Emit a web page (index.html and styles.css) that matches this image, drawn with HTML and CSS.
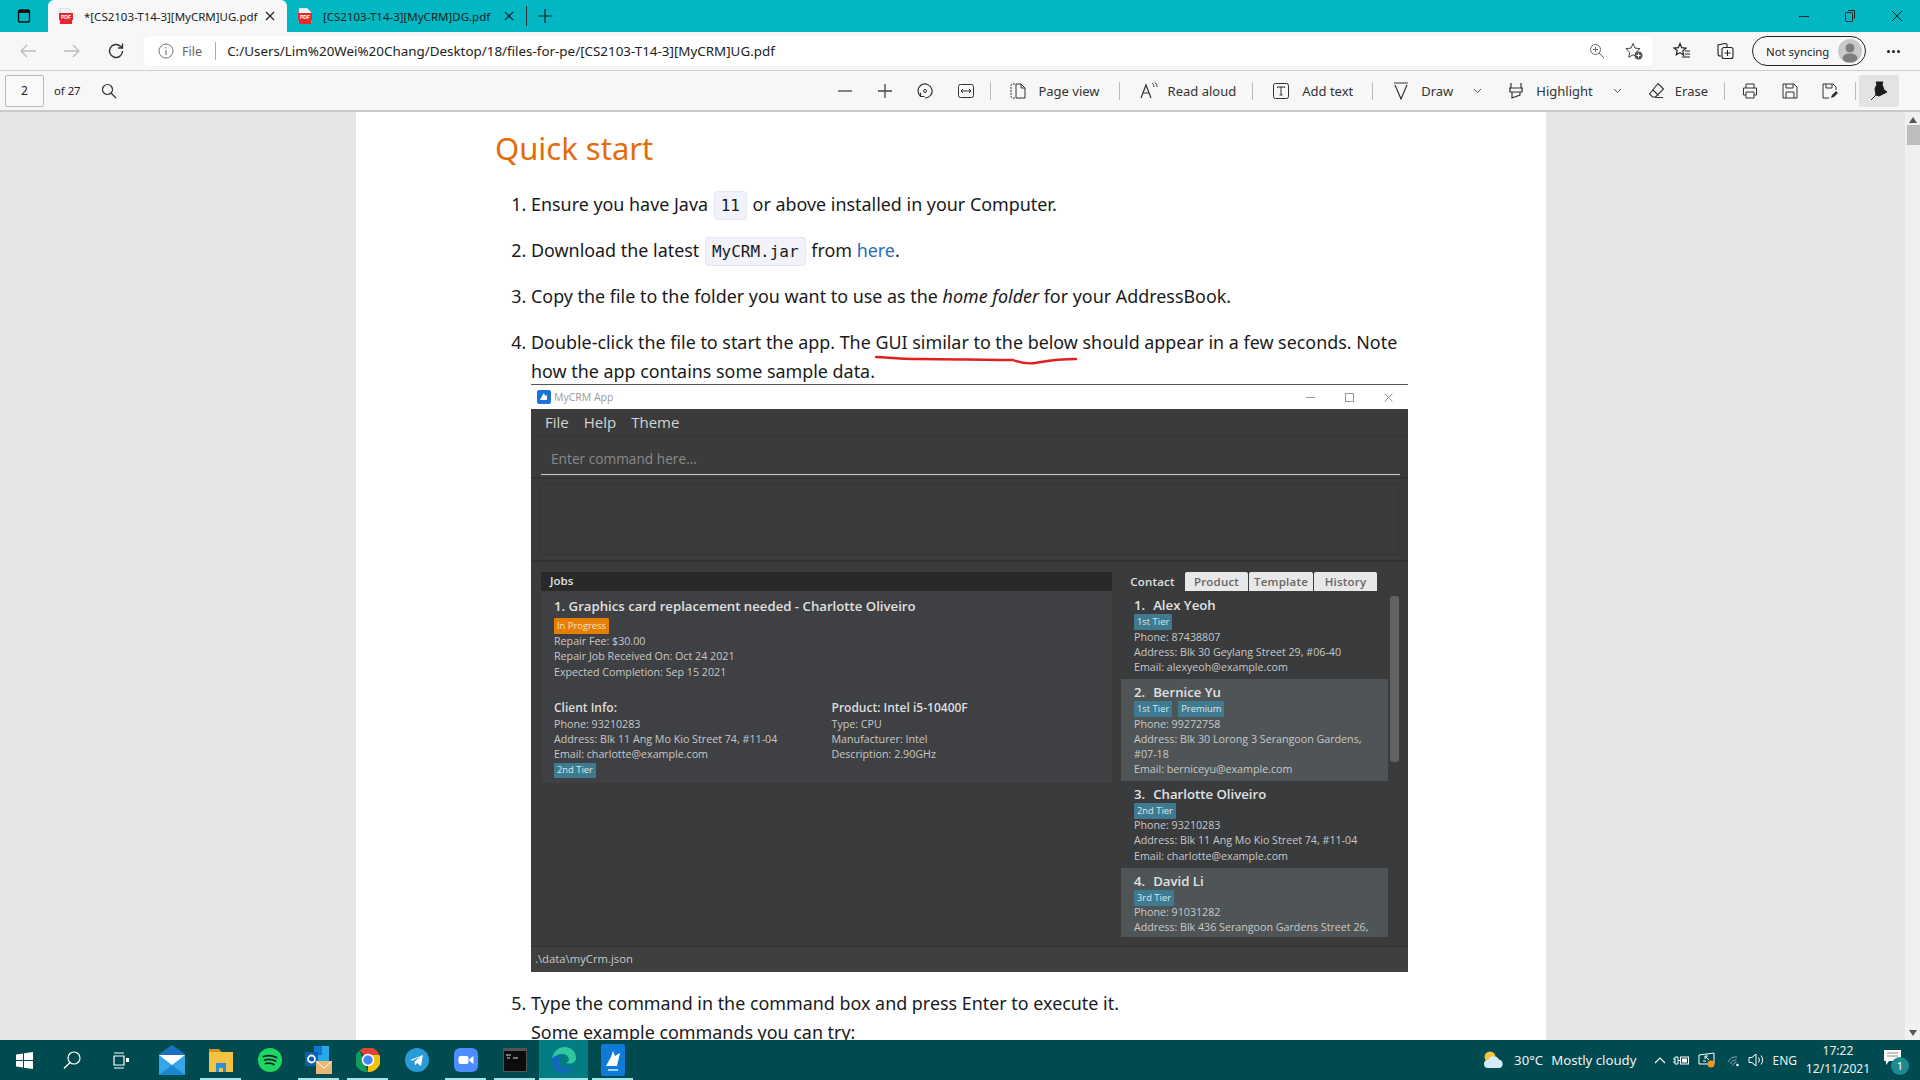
FILE: index.html
```html
<!DOCTYPE html>
<html lang="en">
<head>
<meta charset="utf-8">
<title>MyCRM UG</title>
<link rel="stylesheet" href="styles.css">
</head>
<body>
<header class="tabbar">
  <div class="tabside"><svg width="14" height="14" viewBox="0 0 14 14"><rect x="1.5" y="1" width="11" height="12" rx="1.5" fill="none" stroke="#111" stroke-width="1.4"/><rect x="1.5" y="1" width="11" height="3" fill="#111"/></svg></div>
  <div class="tab active">
    <svg class="pdf" width="14" height="16" viewBox="0 0 14 16"><path d="M1 0h8l4 4v12H1z" fill="#f4f4f4" stroke="#bbb" stroke-width=".5"/><path d="M0 5h14v7h-1v4H1v-4H0z" fill="#e8262c"/><text x="7" y="11" text-anchor="middle" class="pdftxt">PDF</text></svg>
    <span class="tabtitle">*[CS2103-T14-3][MyCRM]UG.pdf</span>
    <svg class="tabx" width="10" height="10" viewBox="0 0 10 10"><path d="M1 1l8 8M9 1l-8 8" stroke="#222" stroke-width="1.2"/></svg>
  </div>
  <div class="tab">
    <svg class="pdf" width="14" height="16" viewBox="0 0 14 16"><path d="M1 0h8l4 4v12H1z" fill="#f4f4f4" stroke="#bbb" stroke-width=".5"/><path d="M0 5h14v7h-1v4H1v-4H0z" fill="#e8262c"/><text x="7" y="11" text-anchor="middle" class="pdftxt">PDF</text></svg>
    <span class="tabtitle">[CS2103-T14-3][MyCRM]DG.pdf</span>
    <svg class="tabx" width="10" height="10" viewBox="0 0 10 10"><path d="M1 1l8 8M9 1l-8 8" stroke="#222" stroke-width="1.2"/></svg>
  </div>
  <div class="tabsep"></div>
  <svg class="plus" width="14" height="14" viewBox="0 0 14 14"><path d="M7 0v14M0 7h14" stroke="#222" stroke-width="1.2"/></svg>
  <div class="winctl">
    <svg width="10" height="10" viewBox="0 0 10 10"><path d="M0 5.5h10" stroke="#222"/></svg>
    <svg width="10" height="12" viewBox="0 0 10 12"><rect x=".5" y="2.5" width="7" height="9" rx="1" fill="none" stroke="#222"/><path d="M3 .5h6.5v8" fill="none" stroke="#222"/></svg>
    <svg width="12" height="12" viewBox="0 0 12 12"><path d="M1 1l10 10M11 1L1 11" stroke="#222"/></svg>
  </div>
</header>

<nav class="addrbar">
  <svg class="nav n-back" width="18" height="16" viewBox="0 0 18 16"><path d="M17 8H2M8 2L2 8l6 6" fill="none" stroke="#bdbdbd" stroke-width="1.3"/></svg>
  <svg class="nav n-fwd" width="18" height="16" viewBox="0 0 18 16"><path d="M1 8h15M10 2l6 6-6 6" fill="none" stroke="#bdbdbd" stroke-width="1.3"/></svg>
  <svg class="nav n-ref" width="18" height="18" viewBox="0 0 18 18"><path d="M15.5 9a6.5 6.5 0 1 1-2-4.7L15.5 6M15.5 1.5V6H11" fill="none" stroke="#333" stroke-width="1.4"/></svg>
  <div class="urlbox">
    <svg class="info" width="16" height="16" viewBox="0 0 16 16"><circle cx="8" cy="8" r="7" fill="none" stroke="#777"/><path d="M8 7v5M8 4v1.6" stroke="#777" stroke-width="1.2"/></svg>
    <span class="file">File</span>
    <span class="urlsep"></span>
    <span class="url">C:/Users/Lim%20Wei%20Chang/Desktop/18/files-for-pe/[CS2103-T14-3][MyCRM]UG.pdf</span>
    <svg class="u-zoom" width="16" height="16" viewBox="0 0 16 16"><circle cx="6.5" cy="6.5" r="5" fill="none" stroke="#666"/><path d="M10 10l5 5M6.5 4v5M4 6.5h5" stroke="#666"/></svg>
    <svg class="u-star" width="18" height="18" viewBox="0 0 18 18"><path d="M8 1.5l2 4.6 5 .5-3.7 3.3 1 4.9L8 12.800l-4.300 2.500 1-4.900L1 6.600l5-.5z" fill="none" stroke="#444"/><circle cx="13.500" cy="13.500" r="4" fill="#555"/><path d="M13.500 11.500v4M11.500 13.500h4" stroke="#fff"/></svg>
  </div>
  <svg class="a-fav" width="18" height="18" viewBox="0 0 18 18"><path d="M7 1.500l1.700 4.200 4.300.4-3.200 2.900.9 4.300L7 10.600l-3.700 2.200.9-4.300L1 6.100l4.300-.4z" fill="none" stroke="#222" stroke-width="1.200"/><path d="M12 9h5M12 12h5M9 15h8" stroke="#222" stroke-width="1.200"/></svg>
  <svg class="a-col" width="18" height="18" viewBox="0 0 18 18"><path d="M4 14H3a2 2 0 0 1-2-2V3l7-1.500a2 2 0 0 1 2 1V5" fill="none" stroke="#222" stroke-width="1.100"/><rect x="5" y="5.500" width="11" height="11" rx="2" fill="none" stroke="#222" stroke-width="1.100"/><path d="M10.500 8v6M7.500 11h6" stroke="#222"/></svg>
  <div class="sync"><span>Not syncing</span><svg width="24" height="24" viewBox="0 0 24 24"><circle cx="12" cy="12" r="12" fill="#c9c9c9"/><circle cx="12" cy="9" r="4.500" fill="#7d7d7d"/><ellipse cx="12" cy="19" rx="7.500" ry="4.500" fill="#7d7d7d"/></svg></div>
  <div class="more"><i></i><i></i><i></i></div>
</nav>

<div class="pdfbar">
  <div class="pagenum">2</div>
  <span class="pageof">of 27</span>
  <svg class="p-search" width="16" height="16" viewBox="0 0 16 16"><circle cx="6.500" cy="6.500" r="5" fill="none" stroke="#333" stroke-width="1.200"/><path d="M10 10l5 5" stroke="#333" stroke-width="1.200"/></svg>
  <div class="tools">
    <svg class="t t-min" width="14" height="14" viewBox="0 0 14 14"><path d="M0 7h14" stroke="#444" stroke-width="1.300"/></svg>
    <svg class="t t-plus" width="14" height="14" viewBox="0 0 14 14"><path d="M0 7h14M7 0v14" stroke="#444" stroke-width="1.300"/></svg>
    <svg class="t t-rot" width="16" height="18" viewBox="0 0 16 18"><path d="M8 16a7 7 0 1 0-4.500-1.700M3.500 10.800v3.700H7.500" fill="none" stroke="#333" stroke-width="1.200"/><circle cx="8" cy="9" r="1.500" fill="none" stroke="#333"/></svg>
    <svg class="t t-fit" width="16" height="14" viewBox="0 0 16 14"><rect x=".5" y=".5" width="15" height="13" rx="2" fill="none" stroke="#333"/><path d="M3 7h10M3 7l2-2M3 7l2 2M13 7l-2-2M13 7l-2 2" fill="none" stroke="#333"/></svg>
    <span class="tsep s1"></span>
    <svg class="t t-page" width="16" height="16" viewBox="0 0 16 16"><path d="M5 1H2.500A1.500 1.500 0 0 0 1 2.500v11A1.500 1.500 0 0 0 2.500 15H5" fill="none" stroke="#333" stroke-dasharray="2 1"/><path d="M6 1h5l4 4v10H6zM11 1v4h4" fill="none" stroke="#333"/></svg>
    <span class="tl l-page">Page view</span>
    <span class="tsep s2"></span>
    <span class="t t-read"><svg width="20" height="18" viewBox="0 0 20 18"><path d="M1 16L6 3l5 13M3 11h6" fill="none" stroke="#333" stroke-width="1.200"/><path d="M12 1c1.500 1 2 2 2 4M14.500 0c2 1.500 2.500 3 2.500 5" fill="none" stroke="#333"/></svg></span>
    <span class="tl l-read">Read aloud</span>
    <span class="tsep s3"></span>
    <svg class="t t-add" width="16" height="16" viewBox="0 0 16 16"><rect x=".5" y=".5" width="15" height="15" rx="2" fill="none" stroke="#333"/><path d="M4.500 5V4h7v1M8 4v8M6.500 12h3" fill="none" stroke="#333"/></svg>
    <span class="tl l-add">Add text</span>
    <span class="tsep s4"></span>
    <svg class="t t-draw" width="16" height="18" viewBox="0 0 16 18"><path d="M1 1h14M2 3l6 14 6-14" fill="none" stroke="#333" stroke-width="1.200"/></svg>
    <span class="tl l-draw">Draw</span>
    <svg class="t t-ch1" width="9" height="6" viewBox="0 0 9 6"><path d="M1 1l3.500 3.500L8 1" fill="none" stroke="#555"/></svg>
    <svg class="t t-high" width="16" height="18" viewBox="0 0 16 18"><path d="M3 1v5M13 1v5M1 6h14M2 6v4h12V6M4 10v6l8-3v-3" fill="none" stroke="#333" stroke-width="1.200"/></svg>
    <span class="tl l-high">Highlight</span>
    <svg class="t t-ch2" width="9" height="6" viewBox="0 0 9 6"><path d="M1 1l3.500 3.500L8 1" fill="none" stroke="#555"/></svg>
    <svg class="t t-erase" width="17" height="17" viewBox="0 0 17 17"><path d="M10 1.500l5.500 5.500-8 8H4.500L1.500 12zM5 8l5.500 5.500M7 15.500h8" fill="none" stroke="#333" stroke-width="1.100"/></svg>
    <span class="tl l-erase">Erase</span>
    <span class="tsep s5"></span>
    <svg class="t t-print" width="16" height="16" viewBox="0 0 16 16"><path d="M4 5V1h8v4M4 12H1.500V5h13v7H12M4 9h8v6H4z" fill="none" stroke="#333"/></svg>
    <svg class="t t-save" width="16" height="16" viewBox="0 0 16 16"><path d="M1 1h11l3 3v11H1zM4 1v4h7V1M4 15V9h8v6" fill="none" stroke="#333"/></svg>
    <svg class="t t-saveas" width="16" height="16" viewBox="0 0 16 16"><path d="M1 1h10l3 3v3M7 15H1V1M4 1v4h6V1" fill="none" stroke="#333"/><path d="M9 15l1-3 4-4 2 2-4 4z" fill="#333"/></svg>
    <span class="tsep s6"></span>
    <div class="pin"><svg width="18" height="20" viewBox="0 0 18 20"><path d="M6 1h7l-1 2 2 6 3 2-6 3-2 1-3-1-1-6 2-5zM6 14l-5 5" fill="#1c1c1c" stroke="#1c1c1c"/></svg></div>
  </div>
</div>

<main class="viewer">
  <section class="page">
    <h1>Quick start</h1>
    <ol class="steps">
      <li>Ensure you have Java <code>11</code> or above installed in your Computer.</li>
      <li>Download the latest <code>MyCRM.jar</code> from <a href="#">here</a>.</li>
      <li>Copy the file to the folder you want to use as the <em>home folder</em> for your AddressBook.</li>
      <li>Double-click the file to start the app. The GUI similar to the below should appear in a few seconds. Note how the app contains some sample data.
        <div class="app">
          <div class="apptitle">
            <svg class="applogo" width="14" height="14" viewBox="0 0 14 14"><rect width="14" height="14" rx="2" fill="#1a73d8"/><path d="M3 10l2-4 2-3 1 3 2-1v5z" fill="#fff"/></svg>
            <span class="appname">MyCRM App</span>
            <div class="appctl">
              <svg width="9" height="9" viewBox="0 0 9 9"><path d="M0 4.500h9" stroke="#999"/></svg>
              <svg width="9" height="9" viewBox="0 0 9 9"><rect x=".5" y=".5" width="8" height="8" fill="none" stroke="#999"/></svg>
              <svg width="9" height="9" viewBox="0 0 9 9"><path d="M.5.500l8 8M8.500.500l-8 8" stroke="#999"/></svg>
            </div>
          </div>
          <div class="appmenu"><span>File</span><span>Help</span><span>Theme</span></div>
          <div class="appcmd"><div class="cmdfield">Enter command here...</div></div>
          <div class="appresult"><div class="resultbox"></div></div>
          <div class="appmain">
            <div class="jobs">
              <div class="jobshead">Jobs</div>
              <div class="jobcard">
                <div class="jobtitle">1. Graphics card replacement needed - Charlotte Oliveiro</div>
                <span class="tag orange">In Progress</span>
                <div class="ln">Repair Fee: $30.00</div>
                <div class="ln">Repair Job Received On: Oct 24 2021</div>
                <div class="ln">Expected Completion: Sep 15 2021</div>
                <div class="jobcols">
                  <div class="jobcol">
                    <div class="subhead">Client Info:</div>
                    <div class="ln">Phone: 93210283</div>
                    <div class="ln">Address: Blk 11 Ang Mo Kio Street 74, #11-04</div>
                    <div class="ln">Email: charlotte@example.com</div>
                    <span class="tag tagb">2nd Tier</span>
                  </div>
                  <div class="jobcol">
                    <div class="subhead">Product: Intel i5-10400F</div>
                    <div class="ln">Type: CPU</div>
                    <div class="ln">Manufacturer: Intel</div>
                    <div class="ln">Description: 2.90GHz</div>
                  </div>
                </div>
              </div>
            </div>
            <div class="contacts">
              <div class="ctabs"><span class="ctab on">Contact</span><span class="ctab t2">Product</span><span class="ctab t3">Template</span><span class="ctab t4">History</span></div>
              <div class="clistwrap">
                <div class="clist">
                  <div class="card"><div class="cname"><b>1.</b>Alex Yeoh</div><div class="tags"><span class="tag">1st Tier</span></div><div class="ln">Phone: 87438807</div><div class="ln">Address: Blk 30 Geylang Street 29, #06-40</div><div class="ln">Email: alexyeoh@example.com</div></div>
                  <div class="card alt"><div class="cname"><b>2.</b>Bernice Yu</div><div class="tags"><span class="tag">1st Tier</span><span class="tag">Premium</span></div><div class="ln">Phone: 99272758</div><div class="ln">Address: Blk 30 Lorong 3 Serangoon Gardens,</div><div class="ln">#07-18</div><div class="ln">Email: berniceyu@example.com</div></div>
                  <div class="card"><div class="cname"><b>3.</b>Charlotte Oliveiro</div><div class="tags"><span class="tag">2nd Tier</span></div><div class="ln">Phone: 93210283</div><div class="ln">Address: Blk 11 Ang Mo Kio Street 74, #11-04</div><div class="ln">Email: charlotte@example.com</div></div>
                  <div class="card alt"><div class="cname"><b>4.</b>David Li</div><div class="tags"><span class="tag">3rd Tier</span></div><div class="ln">Phone: 91031282</div><div class="ln">Address: Blk 436 Serangoon Gardens Street 26,</div></div>
                </div>
                <div class="cscroll"><div class="cthumb"></div></div>
              </div>
            </div>
          </div>
          <div class="appstatus">.\data\myCrm.json</div>
        </div>
      </li>
      <li>Type the command in the command box and press Enter to execute it.<br>Some example commands you can try:</li>
    </ol>
    <svg class="ink" width="210" height="12" viewBox="0 0 210 12"><path d="M1 2C14 2 16 4 46 4S110 5 138 5C146 8 153 9 160 8C167 7 180 4 201 4" fill="none" stroke="#e02020" stroke-width="2.4" stroke-linecap="round"/></svg>
  </section>
  <aside class="vscroll">
    <svg class="arrow" width="8" height="6" viewBox="0 0 8 6"><path d="M4 0l4 6H0z" fill="#555"/></svg>
    <div class="vthumb"></div>
    <svg class="arrow down" width="8" height="6" viewBox="0 0 8 6"><path d="M4 6L0 0h8z" fill="#555"/></svg>
  </aside>
</main>

<footer class="taskbar">
  <div class="tb sys"><svg width="17" height="17" viewBox="0 0 17 17"><path d="M0 2.500l7-1v6.500H0zM8 1.300L17 0v8H8zM0 9h7v6.500l-7-1zM8 9h9v8l-9-1.300z" fill="#fff"/></svg></div>
  <div class="tb sys"><svg width="18" height="18" viewBox="0 0 18 18"><circle cx="11" cy="7" r="6" fill="none" stroke="#fff" stroke-width="1.200"/><path d="M7 11.500L1 17.500" stroke="#fff" stroke-width="1.200"/></svg></div>
  <div class="tb sys"><svg width="17" height="17" viewBox="0 0 17 17"><path d="M2 1h10M2 16h10M2 4h10v9H2z" fill="none" stroke="#fff" stroke-width="1.200"/><rect x="14" y="6" width="3" height="4" fill="#fff"/></svg></div>
  <div class="tb mail"><svg width="26" height="30" viewBox="0 0 26 30"><path d="M13 0l13 9v19H0V9z" fill="#1a6fc0"/><rect y="10" width="26" height="20" fill="#35a7e8"/><path d="M0 10l13 10 13-10z" fill="#fff"/><path d="M0 30l13-10 13 10z" fill="#1a86d0"/></svg></div>
  <div class="tb run"><svg width="24" height="24" viewBox="0 0 24 24"><path d="M0 1h10l2 3h12v20H0z" fill="#f5c342"/><path d="M0 1h10l2 3H0z" fill="#d8941c"/><path d="M7 24v-9h10v9h-3v-4h-4v4z" fill="#2b8fd8"/></svg></div>
  <div class="tb"><svg width="24" height="24" viewBox="0 0 24 24"><circle cx="12" cy="12" r="12" fill="#1ed760"/><path d="M5.500 8.500c4.500-1.500 9-1 13 1M6.500 12c4-1 7.500-.7 11 1M7.500 15.500c3-.8 6-.5 8.500 1" fill="none" stroke="#123" stroke-width="1.800" stroke-linecap="round"/></svg></div>
  <div class="tb run"><svg width="28" height="28" viewBox="0 0 28 28"><rect x="9" y="0" width="15" height="19" fill="#28a8ea"/><rect x="9" y="0" width="8" height="9" fill="#0f78d4"/><rect x="0" y="6" width="13" height="14" fill="#0c5eaf"/><circle cx="6.500" cy="13" r="3.500" fill="none" stroke="#fff" stroke-width="1.800"/><rect x="11" y="15" width="16" height="13" fill="#e9b877"/><path d="M11 15l8 7 8-7" fill="none" stroke="#fff"/></svg></div>
  <div class="tb run"><svg width="24" height="24" viewBox="0 0 24 24"><path d="M12 12L3.700 2.400A12 12 0 0 1 23.400 7H12z" fill="#db4437"/><path d="M12 24a12 12 0 0 0 11.400-17H12z" fill="#f4c20d"/><path d="M12 24L3.700 2.400A12 12 0 0 0 12 24z" fill="#0f9d58"/><circle cx="12" cy="12" r="5.500" fill="#4285f4" stroke="#fff" stroke-width="1.500"/></svg></div>
  <div class="tb"><svg width="24" height="24" viewBox="0 0 24 24"><circle cx="12" cy="12" r="12" fill="#2a9bd8"/><path d="M5 12l13-5-2 11-4-3-2 2.500-.5-4 6-5-8 4z" fill="#fff"/></svg></div>
  <div class="tb run"><svg width="24" height="24" viewBox="0 0 24 24"><rect width="24" height="24" rx="6" fill="#4b8dff"/><rect x="4.500" y="8" width="10" height="8" rx="2" fill="#fff"/><path d="M15.500 11l4-3v8l-4-3z" fill="#fff"/></svg></div>
  <div class="tb run"><svg width="24" height="24" viewBox="0 0 24 24"><rect width="24" height="24" fill="#555"/><rect x="1" y="3" width="22" height="20" fill="#0c0c0c"/><path d="M3 7h5M10 10h5M4 10h3" stroke="#ddd"/></svg></div>
  <div class="tb active run"><svg width="26" height="26" viewBox="0 0 26 26"><path d="M1 12C2 5 7 0 13.500 0 20 0 25 4.500 25 11c0 3.500-3 5.500-6 5.500-2 0-3.500-.5-3.500-1.500 2 0 3-2 2-4.500C16 7.500 13 6.500 10 7 5.500 8 2 10 1 12z" fill="#2fc7a0"/><path d="M1 12c-1 7 4 14 12 14 4 0 8-2 10-5-3 1.500-8 1.500-11-.5C8 18 7 12 10 7 5.500 8 2 10 1 12z" fill="#1268b8"/></svg></div>
  <div class="tb run"><svg width="24" height="32" viewBox="0 0 24 32"><rect width="24" height="32" rx="2" fill="#0f7ad8"/><path d="M5 22l5-9 2-6 2 5 5-3-3 13z" fill="#fff"/><rect x="7" y="25" width="10" height="2" fill="#a8d4f4"/></svg></div>
  <div class="tray">
    <svg class="ty-w" width="22" height="18" viewBox="0 0 22 18"><circle cx="7" cy="6" r="5.500" fill="#f5c342"/><path d="M5 17a4 4 0 0 1 0-8 6 6 0 0 1 11-.5A4.500 4.500 0 0 1 17 17z" fill="#d3ecf8"/></svg>
    <span class="wtemp">30°C</span><span class="wtext">Mostly cloudy</span>
    <svg class="ty-ch" width="12" height="7" viewBox="0 0 12 7"><path d="M1 6l5-5 5 5" fill="none" stroke="#fff" stroke-width="1.100"/></svg>
    <svg class="ty-pl" width="16" height="12" viewBox="0 0 16 12"><path d="M0 5h2M0 8h2M2 3h3v7H2zM5 6.500h2" fill="none" stroke="#fff"/><rect x="7.500" y="3" width="8" height="7" fill="none" stroke="#fff"/><rect x="9" y="4.500" width="5" height="4" fill="#fff"/></svg>
    <svg class="ty-sc" width="17" height="16" viewBox="0 0 17 16"><path d="M1 3l15-2v11H1z" fill="none" stroke="#fff"/><path d="M10 4H7v3M7 4l4 4M5 9h3" fill="none" stroke="#fff"/><circle cx="13" cy="12" r="3.500" fill="#f7931e"/></svg>
    <svg class="ty-wf" width="14" height="14" viewBox="0 0 14 14"><path d="M1 9a9 9 0 0 1 9-5M3.500 11a6 6 0 0 1 6-4M6 12.500a3 3 0 0 1 3.500-3" fill="none" stroke="#9ab" stroke-width="1"/><circle cx="10.500" cy="12" r="1.300" fill="#fff"/></svg>
    <svg class="ty-vl" width="16" height="14" viewBox="0 0 16 14"><path d="M1 4.500h3L8 1v12L4 9.500H1z" fill="none" stroke="#fff"/><path d="M10.500 4.500a4 4 0 0 1 0 5M13 2.500a7 7 0 0 1 0 9" fill="none" stroke="#fff"/></svg>
    <span class="eng">ENG</span>
    <div class="clock"><span>17:22</span><span>12/11/2021</span></div>
    <div class="notif">
      <svg width="17" height="15" viewBox="0 0 17 15"><path d="M0 0h17v11H5l-3 4v-4H0z" fill="#fff"/><path d="M3 3h11M3 6h11" stroke="#888"/></svg>
      <span class="badge">1</span>
    </div>
  </div>
</footer>
</body>
</html>
```

FILE: styles.css
```css
* { box-sizing: border-box; }
html, body { margin: 0; padding: 0; }
body {
  width: 1920px; height: 1080px; overflow: hidden;
  display: flex; flex-direction: column;
  font-family: "Noto Sans", "Liberation Sans", sans-serif;
  color: #222; background: #e6e6e6;
}
svg { display: block; flex: none; }
.pdftxt { font-family: "Liberation Sans", sans-serif; font-size: 5px; font-weight: 700; fill: #fff; }

/* title bar */
.tabbar { height: 32px; background: #00b7c3; display: flex; align-items: flex-end; flex: none; }
.tabside { width: 48px; height: 32px; display: flex; align-items: center; justify-content: center; }
.tab { width: 239px; height: 32px; display: flex; align-items: center; padding: 0 12px 0 11px; font-size: 11.5px; border-radius: 6px 6px 0 0; }
.tab.active { background: #f7f7f7; }
.tabtitle { margin-left: 11px; flex: 1; white-space: nowrap; overflow: hidden; }
.tabsep { width: 1px; height: 20px; background: #333; margin-bottom: 6px; }
.plus { margin: 0 0 9px 11px; }
.winctl { margin-left: auto; height: 32px; display: flex; align-items: center; gap: 36px; padding-right: 17px; }

/* address bar */
.addrbar { height: 38px; background: #f7f7f7; display: flex; align-items: center; flex: none; }
.n-back { margin-left: 19px; }
.n-fwd { margin-left: 26px; }
.n-ref { margin-left: 26px; }
.urlbox { width: 1509px; height: 30px; margin-left: 19px; background: #fff; border-radius: 4px; display: flex; align-items: center; font-size: 12.6px; box-shadow: 0 0 1px #ddd; }
.info { margin-left: 14px; }
.file { margin-left: 8px; color: #666; }
.urlsep { width: 1px; height: 18px; background: #aaa; margin-left: 13px; }
.url { margin-left: 11px; white-space: nowrap; color: #222; font-size: 13.4px; }
.u-zoom { margin-left: auto; }
.u-star { margin: 0 10px 0 20px; }
.a-fav { margin-left: 20px; }
.a-col { margin-left: 26px; }
.sync { width: 114px; height: 30px; margin-left: 17px; border: 1px solid #222; border-radius: 15px; display: flex; align-items: center; justify-content: space-between; padding: 0 3px 0 13px; font-size: 11.4px; }
.more { display: flex; gap: 2px; margin-left: 21px; }
.more i { width: 3px; height: 3px; background: #222; border-radius: 50%; }

/* pdf toolbar */
.pdfbar { height: 42px; background: #f7f7f7; display: flex; align-items: center; flex: none; border-top: 1px solid #cfcfcf; border-bottom: 2px solid #c9c9c9; font-size: 13px; }
.pagenum { width: 39px; height: 32px; margin-left: 5px; border: 1px solid #bbb; border-radius: 2px; background: #f9f9f9; text-align: center; line-height: 30px; font-size: 12px; }
.pageof { margin-left: 10px; font-size: 11.3px; }
.p-search { margin-left: 20px; }
.tools { margin-left: auto; display: flex; align-items: center; }
.tl { white-space: nowrap; color: #333; font-size: 13px; }
.tsep { width: 1px; height: 18px; background: #bbb; }
.t-min { margin-right: 26px; }
.t-plus { margin-right: 25px; }
.t-rot { margin-right: 25px; }
.s1 { margin: 0 19px 0 16px; }
.t-page { margin-right: 12px; }
.s2 { margin: 0 20px 0 19px; }
.t-read { margin-right: 8px; }
.s3 { margin: 0 20px 0 16px; }
.t-add { margin-right: 13px; }
.s4 { margin: 0 20px 0 19px; }
.t-draw { margin-right: 12px; }
.t-ch1 { margin: 0 26px 0 20px; }
.t-high { margin-right: 12px; }
.t-ch2 { margin: 0 26px 0 20px; }
.t-erase { margin-right: 10px; }
.s5 { margin: 0 17px 0 16px; }
.t-save, .t-saveas { margin-left: 24px; }
.s6 { margin: 0 3px 0 17px; }
.pin { width: 40px; height: 32px; background: #e3e3e3; border-radius: 2px; margin-right: 21px; display: flex; align-items: center; justify-content: center; }

/* viewer */
.viewer { flex: 1; min-height: 0; display: flex; background: #e6e6e6; overflow: hidden; }
.page { position: relative; width: 1190px; margin-left: 356px; background: #fff; padding: 14px 0 0 139px; color: #1a1a1a; font-size: 17.9px; line-height: 29px; height: 928px; overflow: hidden; }
h1 { margin: 0 0 20px; font-size: 31px; line-height: 44px; font-weight: 400; color: #e46c0a; }
.steps { margin: 0; padding: 0 0 0 36px; }
.steps li { margin-bottom: 17px; width: 878px; }
code { font-family: "DejaVu Sans Mono", "Liberation Mono", monospace; font-size: 16px; line-height: 1; background: #f2f2fb; border: 1px solid #e6e6f2; border-radius: 4px; padding: 4px 6px; margin: 0 1px; }
a { color: #2a6bb8; text-decoration: none; }
.ink { position: absolute; left: 519px; top: 243px; }
.vscroll { width: 15px; margin-left: 359px; background: #f0f0f0; display: flex; flex-direction: column; align-items: center; }
.arrow { margin-top: 5px; }
.arrow.down { margin: auto 0 4px; }
.vthumb { width: 13px; height: 20px; background: #bdbdbd; margin-top: 2px; margin-left: 1px; }

/* embedded app */
.app { width: 877px; height: 588px; margin-top: -2px; display: flex; flex-direction: column; background: #3b3b3b; font-family: "Open Sans", "Noto Sans", sans-serif; color: #d8d8d8; line-height: normal; border-top: 1px solid #555; }
.apptitle { height: 24px; background: #fff; display: flex; align-items: center; padding-left: 6px; flex: none; }
.appname { margin-left: 3px; font-size: 10.5px; color: #9a9a9a; }
.appctl { margin-left: auto; display: flex; gap: 30px; padding-right: 15px; }
.appmenu { height: 28px; background: #3b3b3b; display: flex; align-items: center; gap: 15px; padding: 0 0 2px 14px; font-size: 15px; color: #d4d4d4; border-bottom: 1px solid #333; flex: none; }
.appcmd { height: 42px; padding: 0 8px 0 10px; flex: none; border-bottom: 2px solid #333; }
.cmdfield { height: 38px; border-bottom: 1px solid #ccc; padding: 12px 10px 0; font-size: 13.7px; color: #8a8a8a; line-height: 20px; }
.appresult { height: 83px; padding: 5px 9px; flex: none; border-bottom: 2px solid #333; }
.resultbox { height: 71px; border: 1px solid #333; background: #3b3b3b; }
.appmain { flex: 1; min-height: 0; display: flex; padding: 10px 9px 9px 10px; border-bottom: 1px solid #2e2e2e; }
.jobs { width: 571px; display: flex; flex-direction: column; background: #3a3a3a; }
.jobshead { height: 19px; background: #282a2a; padding-left: 9px; font-size: 11.5px; font-weight: 600; line-height: 18px; color: #e0e0e0; flex: none; }
.jobcard { background: #3f4043; height: 192px; padding: 6px 13px; }
.jobtitle { font-size: 13.2px; font-weight: 600; line-height: 18px; color: #e0e0e0; margin-bottom: 3px; }
.ln { font-size: 10.7px; line-height: 15.3px; color: #c8c8c8; white-space: nowrap; }
.tag { display: block; width: fit-content; height: 16px; line-height: 15px; padding: 0 3px; font-size: 9.4px; background: #3e7b91; color: #d8e8ee; border-radius: 1px; font-weight: 400; flex: none; }
.tag.orange { background: #e67e00; color: #f3e4cc; }
.tag.tagb { height: 15px; line-height: 14px; }
.jobcols { display: flex; margin-top: 18px; }
.jobcol { width: 277.5px; flex: none; }
.subhead { font-size: 12px; font-weight: 600; line-height: 19px; color: #dedede; }
.contacts { margin-left: 9px; flex: 1; display: flex; flex-direction: column; }
.ctabs { height: 19px; display: flex; flex: none; gap: 1px; font-size: 11.5px; line-height: 19px; letter-spacing: .2px; }
.ctab { background: #e8e8e8; color: #666; border-radius: 2px 2px 0 0; text-align: center; font-weight: 600; width: 63px; }
.ctab.on { background: #3a3b3d; color: #e0e0e0; }
.ctab.t3 { width: 64px; }
.clistwrap { flex: 1; min-height: 0; display: flex; margin-top: 1px; }
.clist { width: 267px; overflow: hidden; height: 345px; }
.card { background: #3a3b3d; padding: 4px 13px 0; height: 87px; }
.card.alt { background: #4f5557; height: 101.5px; }
.card:nth-child(4) { height: 69px; }
.cname { font-size: 13.2px; font-weight: 600; line-height: 18px; color: #e2e2e2; }
.cname b { font-weight: 600; margin-right: 8px; }
.tags { display: flex; gap: 6px; height: 15.5px; }
.cscroll { width: 9px; margin-left: 2px; padding-top: 4px; }
.cthumb { width: 9px; height: 166px; background: #626262; border-radius: 3px; }
.appstatus { height: 25px; background: #3f3f3f; padding: 3px 4px; font-size: 11.3px; color: #c8c8c8; line-height: 18px; flex: none; }

/* taskbar */
.taskbar { height: 40px; flex: none; background: #004b50; display: flex; align-items: center; color: #f0f0f0; }
.tb { width: 49px; height: 40px; display: flex; align-items: center; justify-content: center; position: relative; flex: none; }
.tb.sys { width: 48px; }
.tb.mail { margin-left: 3px; }
.tb.active { background: #047c84; }
.tb.run::after { content: ""; position: absolute; left: 4px; right: 4px; bottom: 0; height: 2px; background: #a3e6ea; }
.tb.active::after { left: 0; right: 0; }
.tray { margin-left: auto; display: flex; align-items: center; height: 40px; }
.wtemp { margin-left: 9px; font-size: 13.2px; }
.wtext { margin-left: 8px; font-size: 13.2px; white-space: nowrap; }
.ty-ch { margin-left: 18px; }
.ty-pl { margin-left: 7px; }
.ty-sc { margin-left: 9px; }
.ty-wf { margin-left: 12px; }
.ty-vl { margin-left: 7px; }
.eng { margin-left: 8px; font-size: 12px; }
.clock { margin-left: 13px; width: 56px; display: flex; flex-direction: column; align-items: center; font-size: 12.1px; line-height: 18px; white-space: nowrap; }
.notif { position: relative; width: 40px; margin-left: 14px; height: 40px; padding: 10px 0 0 4px; }
.badge { position: absolute; left: 11px; top: 17px; width: 18px; height: 18px; border-radius: 50%; background: #1c8a8f; color: #fff; font-size: 11px; line-height: 18px; text-align: center; }
```
